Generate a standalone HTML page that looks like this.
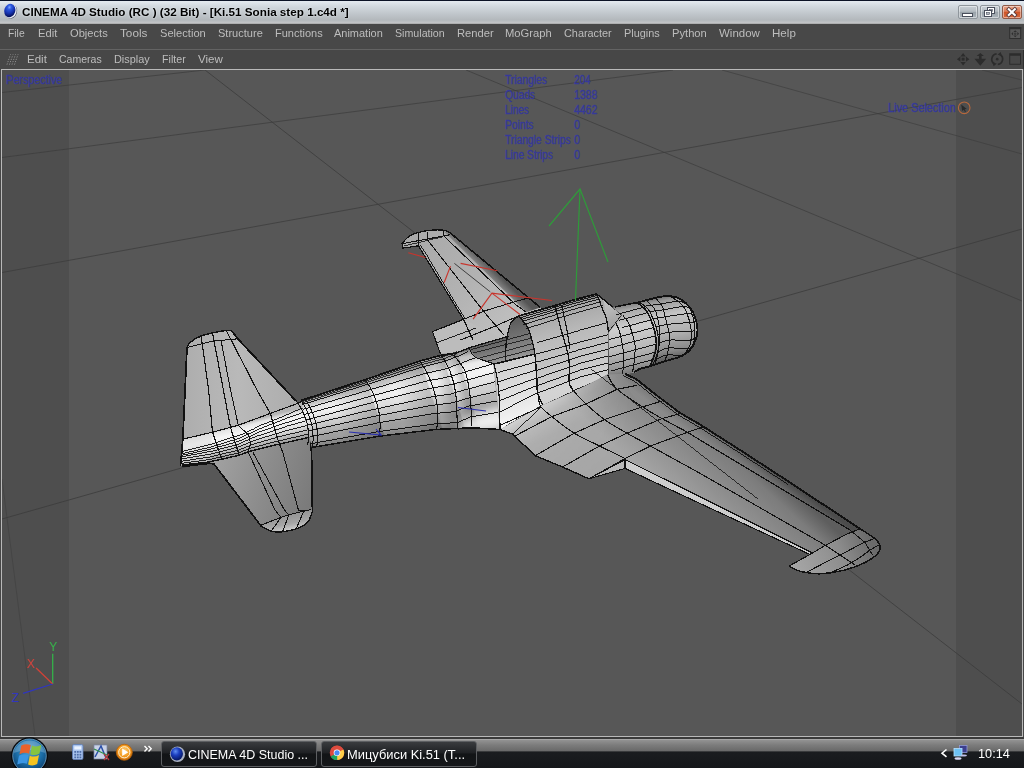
<!DOCTYPE html>
<html lang="en">
<head>
<meta charset="utf-8">
<title>CINEMA 4D Studio (RC ) (32 Bit) - [Ki.51 Sonia step 1.c4d *]</title>
<style>
html,body{margin:0;padding:0;}
body{width:1024px;height:768px;overflow:hidden;position:relative;background:#474747;
  font-family:"Liberation Sans","DejaVu Sans",sans-serif;font-size:11px;color:#c8c8c8;}
.abs{position:absolute;}
/* ---------- window title bar ---------- */
#titlebar{left:0;top:0;width:1024px;height:24px;
  background:linear-gradient(#0b1326 0,#0b1326 1px,#e4eaf0 1px,#d3dae0 6px,#c2c8cd 13px,#b3b8bc 20px,#c4c6c8 23px,#9a9a9a 24px);}
#title{transform:scaleX(.9995);transform-origin:0 0;left:21.500px;top:5px;font-size:11.700px;font-weight:bold;color:#000;white-space:nowrap;letter-spacing:0px;
  text-shadow:0 0 2px #eef2f6;}
.wbtn{top:4.500px;width:19.500px;height:14.500px;border:1px solid #8f969c;border-radius:2px;box-sizing:border-box;
  background:linear-gradient(#c9d0d6,#b5bcc2 45%,#99a2a9 50%,#aab2b9);box-shadow:inset 0 0 0 1px rgba(255,255,255,.45);}
#bclose{background:linear-gradient(#e9a589,#dd7a55 45%,#cc5428 50%,#d9683c);border-color:#8f5a48;}
/* ---------- menus ---------- */
#menubar{left:0;top:24px;width:1024px;height:25px;background:#484848;}
#menusep{left:0;top:49px;width:1024px;height:1px;background:#636363;}
#viewbar{left:0;top:50px;width:1024px;height:19px;background:#474747;}
.mi{position:absolute;top:3.400px;white-space:nowrap;font-size:11px;color:#bdbdbd;transform-origin:0 0;}
.vi{position:absolute;top:3px;white-space:nowrap;font-size:11px;color:#bdbdbd;transform-origin:0 0;}
/* ---------- viewport ---------- */
#viewport{left:1px;top:69px;width:1022px;height:668px;box-sizing:border-box;border:1px solid #b9b9b9;background:#575757;overflow:hidden;}
#bandL{left:0;top:0;width:67px;height:666px;background:#4e4e4e;}
#bandR{left:954px;top:0;width:66px;height:666px;background:#4e4e4e;}
.hud{position:absolute;color:#3a3fa8;font-size:11.5px;white-space:nowrap;transform-origin:0 0;}
/* ---------- taskbar ---------- */
#taskbar{left:0;top:737px;width:1024px;height:31px;
  background:linear-gradient(#3a3a3a 0,#3a3a3a 2px,#b2b2b2 2px,#909090 3.500px,#7c7c7c 8px,#686868 14.200px,#1a1c1f 14.700px,#15171a 31px);}
.tbtn{top:3.500px;height:26px;box-sizing:border-box;border:1px solid #5d5f62;border-radius:3px;background:linear-gradient(#3a3c3f,#1f2124 45%,#121416 50%,#15171a);
  color:#fff;font-size:12px;white-space:nowrap;}
.tbtn span{position:absolute;top:6px;transform:scaleX(.9995);transform-origin:0 0;}
#clock{transform:scaleX(1.06);transform-origin:0 0;left:977.500px;top:10px;color:#fff;font-size:12px;}
</style>
</head>
<body>
<!-- TITLE BAR -->
<div id="titlebar" class="abs">
  <svg class="abs" style="left:0;top:0" width="22" height="24" viewBox="0 0 22 24">
    <defs><radialGradient id="c4d" cx="38%" cy="28%" r="70%"><stop offset="0" stop-color="#7fa6ff"/><stop offset=".25" stop-color="#2f5be0"/><stop offset=".65" stop-color="#1733b0"/><stop offset="1" stop-color="#07135e"/></radialGradient></defs>
    <g transform="rotate(18 10 10.800)">
      <ellipse cx="11" cy="11.100" rx="6.300" ry="7.300" fill="#4a5064"/>
      <ellipse cx="10.500" cy="10.900" rx="6.200" ry="7.300" fill="#e8ecf4"/>
      <ellipse cx="9.700" cy="10.600" rx="5.500" ry="6.800" fill="url(#c4d)"/>
    </g>
  </svg>
  <div id="title" class="abs">CINEMA 4D Studio (RC ) (32 Bit) - [Ki.51 Sonia step 1.c4d *]</div>
  <div class="abs wbtn" style="left:958px"><svg width="17" height="12" class="abs" style="left:0;top:0"><rect x="3.5" y="7.5" width="10" height="3" fill="#fff" stroke="#4a4f5c"/></svg></div>
  <div class="abs wbtn" style="left:980px"><svg width="17" height="12" class="abs" style="left:0;top:0"><rect x="6.500" y="1.500" width="7" height="6" fill="#fff" stroke="#4a4f5c"/><rect x="8.5" y="3.500" width="3" height="2" fill="#b5bcc2" stroke="#4a4f5c" stroke-width=".6"/><rect x="3.500" y="4.500" width="7" height="6" fill="#fff" stroke="#4a4f5c"/><rect x="5.500" y="6.500" width="3" height="2" fill="#b5bcc2" stroke="#4a4f5c" stroke-width=".6"/></svg></div>
  <div id="bclose" class="abs wbtn" style="left:1002px"><svg width="17" height="12" class="abs" style="left:0;top:0"><path d="M5.800 3.300 L11.800 9 M11.800 3.300 L5.800 9" stroke="#5b3a3a" stroke-width="3.800" stroke-linecap="square"/><path d="M5.800 3.300 L11.800 9 M11.800 3.300 L5.800 9" stroke="#fff" stroke-width="2.100" stroke-linecap="square"/></svg></div>
</div>

<!-- MAIN MENU -->
<div id="menubar" class="abs">
  <span class="mi" style="left:7.7px;transform:scaleX(0.939)">File</span>
  <span class="mi" style="left:37.6px;transform:scaleX(1.017)">Edit</span>
  <span class="mi" style="left:69.6px;transform:scaleX(1.013)">Objects</span>
  <span class="mi" style="left:120.1px;transform:scaleX(1.066)">Tools</span>
  <span class="mi" style="left:159.6px;transform:scaleX(1.011)">Selection</span>
  <span class="mi" style="left:217.6px;transform:scaleX(1.003)">Structure</span>
  <span class="mi" style="left:274.6px;transform:scaleX(1.001)">Functions</span>
  <span class="mi" style="left:333.6px;transform:scaleX(0.997)">Animation</span>
  <span class="mi" style="left:394.6px;transform:scaleX(0.968)">Simulation</span>
  <span class="mi" style="left:456.6px;transform:scaleX(1.020)">Render</span>
  <span class="mi" style="left:505.1px;transform:scaleX(1.020)">MoGraph</span>
  <span class="mi" style="left:563.6px;transform:scaleX(0.988)">Character</span>
  <span class="mi" style="left:623.6px;transform:scaleX(0.991)">Plugins</span>
  <span class="mi" style="left:671.6px;transform:scaleX(1.016)">Python</span>
  <span class="mi" style="left:718.6px;transform:scaleX(1.044)">Window</span>
  <span class="mi" style="left:771.6px;transform:scaleX(1.054)">Help</span>
</div>
<div id="menusep" class="abs"></div>

<!-- VIEWPORT MENU -->
<div id="viewbar" class="abs">
  <span class="vi" style="left:26.6px;transform:scaleX(1.046)">Edit</span>
  <span class="vi" style="left:58.7px;transform:scaleX(0.956)">Cameras</span>
  <span class="vi" style="left:113.6px;transform:scaleX(0.991)">Display</span>
  <span class="vi" style="left:161.6px;transform:scaleX(0.969)">Filter</span>
  <span class="vi" style="left:197.6px;transform:scaleX(1.050)">View</span>
</div>


<!-- menu bar / viewport nav icons -->
<svg class="abs" style="left:0;top:0;pointer-events:none" width="1024" height="72" viewBox="0 0 1024 72">
  <!-- layout icon in main menu -->
  <rect x="1009.7" y="27.5" width="11" height="11" fill="#585858" stroke="#2f2f2f" stroke-width="1"/>
  <rect x="1009.2" y="27" width="12" height="2.200" fill="#2f2f2f"/>
  <path d="M1015.2 30.2 l1.800 1.800 h-3.600z M1015.2 37.200 l1.800 -1.800 h-3.600z M1011.3 33.700 l1.800 -1.800 v3.600z M1019.100 33.700 l-1.800 -1.800 v3.600z" fill="#2f2f2f"/>
  <circle cx="1015.2" cy="33.700" r="1.300" fill="#3c3c3c"/>
  <!-- grip -->
  <g stroke="#a9a9a9" stroke-width="1" stroke-dasharray="1 1.500" opacity=".9">
    <path d="M7 64.500 L10.500 54.500 M9.500 64.500 L13 54.500 M12 64.500 L15.500 54.500 M14.500 64.500 L18 54.500"/>
  </g>
  <!-- move -->
  <g fill="#2c2c2c">
    <path d="M963.100 52.900 l2.700 3.500 h-5.400z M963.100 65.400 l2.700 -3.500 h-5.400z M956.900 59.150 l3.500 -2.700 v5.400z M969.400 59.150 l-3.500 -2.700 v5.400z"/>
    <rect x="961.600" y="57.650" width="3" height="3"/>
    <!-- dolly -->
    <path d="M980.300 52.900 l3.700 3.200 h-2.400 v2.700 h3 l1.600 0 l-5.900 6.900 l-5.900 -6.900 h4.600 v-2.700 h-2.400z"/>
    <!-- maximise -->
    <path d="M1009.200 53.250 h11.800 v11.400 h-11.800z M1010.200 55.650 v8 h9.800 v-8z" fill-rule="evenodd"/>
  </g>
  <!-- rotate -->
  <g fill="none" stroke="#2c2c2c" stroke-width="1.700">
    <path d="M996.600 53.900 A5.400 5.400 0 0 0 994.400 63.900"/>
    <path d="M997.800 64.400 A5.400 5.400 0 0 0 1000 54.400"/>
  </g>
  <path d="M992.800 62 l4 1.700 l-3.300 2.500z M1001.600 56.300 l-4 -1.700 l3.300 -2.500z" fill="#2c2c2c"/>
  <circle cx="997.200" cy="59.150" r="1.300" fill="#2c2c2c"/>
  <rect x="1023" y="50" width="1" height="19" fill="#2e2e2e"/>
</svg>

<!-- VIEWPORT -->
<div id="viewport" class="abs">
  <div id="bandL" class="abs"></div>
  <div id="bandR" class="abs"></div>
  <svg id="scene" class="abs" style="left:-2px;top:-70px" width="1024" height="768" viewBox="0 0 1024 768">
  <defs>
<linearGradient id="gFus" gradientUnits="userSpaceOnUse" x1="430" y1="352" x2="447" y2="432"><stop offset="0" stop-color="#8e8e8e"/><stop offset="0.1" stop-color="#c9c9c9"/><stop offset="0.3" stop-color="#f4f4f4"/><stop offset="0.48" stop-color="#e2e2e2"/><stop offset="0.7" stop-color="#bcbcbc"/><stop offset="0.88" stop-color="#9b9b9b"/><stop offset="1" stop-color="#7e7e7e"/></linearGradient>
<linearGradient id="gStabU" gradientUnits="userSpaceOnUse" x1="187" y1="400" x2="300" y2="400"><stop offset="0" stop-color="#aeaeae"/><stop offset="0.45" stop-color="#b9b9b9"/><stop offset="1" stop-color="#acacac"/></linearGradient>
<linearGradient id="gStabL" gradientUnits="userSpaceOnUse" x1="215" y1="470" x2="312" y2="500"><stop offset="0" stop-color="#a0a0a0"/><stop offset="0.5" stop-color="#8c8c8c"/><stop offset="1" stop-color="#7a7a7a"/></linearGradient>
<linearGradient id="gFarW" gradientUnits="userSpaceOnUse" x1="420" y1="250" x2="500" y2="330"><stop offset="0" stop-color="#ababab"/><stop offset="0.5" stop-color="#b2b2b2"/><stop offset="1" stop-color="#bebebe"/></linearGradient>
<linearGradient id="gFarWLE" gradientUnits="userSpaceOnUse" x1="470" y1="270" x2="482" y2="258"><stop offset="0" stop-color="#b8b8b8"/><stop offset="0.5" stop-color="#8a8a8a"/><stop offset="1" stop-color="#555"/></linearGradient>
<linearGradient id="gWing" gradientUnits="userSpaceOnUse" x1="640" y1="470" x2="700" y2="405"><stop offset="0" stop-color="#a6a6a6"/><stop offset="0.45" stop-color="#8e8e8e"/><stop offset="0.8" stop-color="#7c7c7c"/><stop offset="1" stop-color="#5e5e5e"/></linearGradient>
<linearGradient id="gCowl" gradientUnits="userSpaceOnUse" x1="660" y1="296" x2="672" y2="360"><stop offset="0" stop-color="#6a6a6a"/><stop offset="0.08" stop-color="#9a9a9a"/><stop offset="0.3" stop-color="#c4c4c4"/><stop offset="0.6" stop-color="#b0b0b0"/><stop offset="0.85" stop-color="#8a8a8a"/><stop offset="1" stop-color="#5a5a5a"/></linearGradient>
<linearGradient id="gCowlR" gradientUnits="userSpaceOnUse" x1="622" y1="304" x2="634" y2="372"><stop offset="0" stop-color="#7a7a7a"/><stop offset="0.1" stop-color="#a8a8a8"/><stop offset="0.35" stop-color="#cecece"/><stop offset="0.65" stop-color="#bababa"/><stop offset="0.9" stop-color="#989898"/><stop offset="1" stop-color="#7a7a7a"/></linearGradient>
</defs>
<line x1="2" y1="92.5" x2="205" y2="70" stroke="#3c3c3c" stroke-width="0.9" opacity="0.8"/>
<line x1="2" y1="157.5" x2="673" y2="70" stroke="#3c3c3c" stroke-width="0.9" opacity="0.8"/>
<line x1="2" y1="272.5" x2="1022" y2="87.5" stroke="#3c3c3c" stroke-width="0.9" opacity="0.85"/>
<line x1="2" y1="519" x2="1022" y2="229" stroke="#3c3c3c" stroke-width="0.9" opacity="0.9"/>
<line x1="205" y1="70" x2="1022" y2="704" stroke="#3c3c3c" stroke-width="0.9" opacity="0.9"/>
<line x1="466" y1="70" x2="1022" y2="301" stroke="#3c3c3c" stroke-width="0.9" opacity="0.8"/>
<line x1="722" y1="70" x2="1022" y2="154" stroke="#3c3c3c" stroke-width="0.9" opacity="0.7"/>
<line x1="982" y1="70" x2="1022" y2="80" stroke="#3c3c3c" stroke-width="0.9" opacity="0.7"/>
<line x1="2" y1="479" x2="35" y2="736" stroke="#3c3c3c" stroke-width="0.9" opacity="0.55"/>
<polygon points="402,243.4 409,236.4 418.4,232.5 431,230.2 443.4,230.2 449.7,232.5 540.3,307.5 560,330 520,350 473,340 463.8,320 418.4,245.8 402.8,248.1" fill="url(#gFarW)" stroke="none" stroke-width="0" />
<polygon points="443.4,231 449.7,232.5 540.3,307.5 526.2,312.2" fill="url(#gFarWLE)" stroke="none" stroke-width="0" />
<polygon points="432.5,331.7 463.8,319.2 505,340 480,352 440.5,354" fill="#bcbcbc" stroke="none" stroke-width="0" />
<path d="M402 243.4 C403.2 242.2 406.3 238.2 409 236.4 C411.7 234.6 414.7 233.5 418.4 232.5 C422.1 231.5 426.8 230.6 431 230.2 C435.2 229.8 440.3 229.8 443.4 230.2 C446.5 230.6 448.6 232.1 449.7 232.5" fill="none" stroke="#111" stroke-width="1.26"  shape-rendering="crispEdges"/>
<polyline points="449.7,232.5 540.3,307.5" fill="none" stroke="#111" stroke-width="1.61"  shape-rendering="crispEdges"/>
<polyline points="402,243.4 402.8,248.1 418.4,245.8" fill="none" stroke="#111" stroke-width="1.15"  shape-rendering="crispEdges"/>
<polyline points="418.4,245.8 463.8,320 473,340" fill="none" stroke="#111" stroke-width="1.26"  shape-rendering="crispEdges"/>
<polyline points="420.5,245.3 428.6,257.5 465.5,318.6" fill="none" stroke="#111" stroke-width="0.92"  shape-rendering="crispEdges"/>
<polyline points="418.4,232.5 418.4,245.8" fill="none" stroke="#111" stroke-width="1.03"  shape-rendering="crispEdges"/>
<polyline points="402.8,243.6 449.7,234.8" fill="none" stroke="#111" stroke-width="1.03"  shape-rendering="crispEdges"/>
<polyline points="404,246 443.4,236.6" fill="none" stroke="#111" stroke-width="0.8"  shape-rendering="crispEdges"/>
<polyline points="427.8,232 427.8,240.3 485.6,313.8 504.4,335.6" fill="none" stroke="#111" stroke-width="1.03"  shape-rendering="crispEdges"/>
<polyline points="443.4,230.5 443.4,235.6 515.3,304.4 526.2,312.2" fill="none" stroke="#111" stroke-width="1.03"  shape-rendering="crispEdges"/>
<polyline points="463.8,319.2 485.6,310.6 513.8,302 527.8,298.1" fill="none" stroke="#111" stroke-width="1.03"  shape-rendering="crispEdges"/>
<polyline points="460.6,340 495,326.2 520,315.3" fill="none" stroke="#111" stroke-width="1.03"  shape-rendering="crispEdges"/>
<polyline points="432.5,331.7 463.8,319.2" fill="none" stroke="#111" stroke-width="1.15"  shape-rendering="crispEdges"/>
<polyline points="432.5,331.7 440.5,354" fill="none" stroke="#111" stroke-width="1.15"  shape-rendering="crispEdges"/>
<polyline points="436,343 476,328" fill="none" stroke="#111" stroke-width="0.92"  shape-rendering="crispEdges"/>
<polyline points="454.4,263.4 490.3,291.9" fill="none" stroke="#222" stroke-width="0.8" />
<polygon points="187,347.5 190,342.5 201,336 212.5,333 226,330.5 232,331 237.5,338.5 296,401 312,420 300,446 180.5,466 182.5,438.8" fill="url(#gStabU)" stroke="none" stroke-width="0" />
<polygon points="209.4,461.9 213.8,463.8 261.2,526.2 271.2,531.2 282.5,531.8 296.2,528.8 307.5,522.5 312.5,511.2 311.2,436.9 276.6,444.7 248.4,451.7 239,455.3" fill="url(#gStabL)" stroke="none" stroke-width="0" />
<linearGradient id="gSLtip" gradientUnits="userSpaceOnUse" x1="285" y1="512" x2="289" y2="532"><stop offset="0" stop-color="#8e8e8e"/><stop offset="0.6" stop-color="#a6a6a6"/><stop offset="1" stop-color="#d8d8d8"/></linearGradient>
<polygon points="261.2,526.2 271.2,531.2 282.5,531.8 296.2,528.8 307.5,522.5 312.5,511.2 311,509.5 290,514.5 268,522" fill="url(#gSLtip)" stroke="none" stroke-width="0" />
<linearGradient id="gCone" gradientUnits="userSpaceOnUse" x1="236" y1="424" x2="244" y2="456"><stop offset="0" stop-color="#b4b4b4"/><stop offset="0.12" stop-color="#e6e6e6"/><stop offset="0.3" stop-color="#f6f6f6"/><stop offset="0.55" stop-color="#e0e0e0"/><stop offset="0.8" stop-color="#b0b0b0"/><stop offset="1" stop-color="#8e8e8e"/></linearGradient>
<clipPath id="cCone"><polygon points="182.8,439.2 212.5,432.2 238.3,425.2 270.3,413.4 296.1,404 304,400.5 316,400 316,447 311,436.9 276.6,444.7 248.4,451.7 239,455.3 209.4,461.9 182,465"/></clipPath>
<polygon points="182.8,439.2 212.5,432.2 238.3,425.2 270.3,413.4 296.1,404 304,400.5 311,436.9 276.6,444.7 248.4,451.7 239,455.3 209.4,461.9 182,465" fill="url(#gCone)" stroke="none" stroke-width="0" />
<polygon points="182.8,439.2 212.5,432.2 209.4,461.9 182,465" fill="#d8d8d8" stroke="none" stroke-width="0" opacity=".55"/>
<path d="M187 347.5 C187.5 346.7 187.7 344.4 190 342.5 C192.3 340.6 197.2 337.6 201 336 C204.8 334.4 208.3 333.9 212.5 333 C216.7 332.1 222.8 330.8 226 330.5 C229.2 330.2 231 330.9 232 331" fill="none" stroke="#111" stroke-width="1.38"  shape-rendering="crispEdges"/>
<polyline points="232,331 237.5,338.5 296,401" fill="none" stroke="#111" stroke-width="1.84"  shape-rendering="crispEdges"/>
<polyline points="187,347.5 182.8,439.2 180.5,466" fill="none" stroke="#111" stroke-width="1.72"  shape-rendering="crispEdges"/>
<polyline points="187,347.5 212.5,341.2 237.5,338.8" fill="none" stroke="#111" stroke-width="1.03"  shape-rendering="crispEdges"/>
<polyline points="201.2,336.2 208.6,390 212.5,432.2 221.9,459.5" fill="none" stroke="#111" stroke-width="1.15"  shape-rendering="crispEdges"/>
<polyline points="212.5,333 223.4,390 230.5,427.5 239,454.8" fill="none" stroke="#111" stroke-width="1.15"  shape-rendering="crispEdges"/>
<polyline points="221.2,341.2 230.5,390 238.3,425.2" fill="none" stroke="#111" stroke-width="1.03"  shape-rendering="crispEdges"/>
<polyline points="226.2,330.5 257,390 270.3,413.4 278,440 282.8,452.5" fill="none" stroke="#111" stroke-width="1.15"  shape-rendering="crispEdges"/>
<polyline points="182.8,439.2 212.5,432.2 238.3,425.2 270.3,413.4 296.1,404 304,400.5" fill="none" stroke="#111" stroke-width="1.15"  shape-rendering="crispEdges"/>
<polyline points="182.4,451.3 211.3,444.1 238.5,435.4 264.5,423.6 292.1,412.3 306,406.7" fill="none" stroke="#111" stroke-width="0.92"  shape-rendering="crispEdges"/>
<polyline points="182.4,453.6 211,447 238.6,438.5 262.1,427.8 289.8,417.1 306.7,411.1" fill="none" stroke="#111" stroke-width="0.92"  shape-rendering="crispEdges"/>
<polyline points="182.3,455.2 210.7,449.2 238.7,441.3 259.7,431.9 287.5,422 307.5,415.8" fill="none" stroke="#111" stroke-width="0.92"  shape-rendering="crispEdges"/>
<polyline points="182.3,456.7 210.5,451.4 238.7,443.8 257.5,435.8 285.3,426.6 308.2,420.2" fill="none" stroke="#111" stroke-width="0.92"  shape-rendering="crispEdges"/>
<polyline points="182.2,458.8 210.2,454.2 238.8,446.9 255,440.2 282.8,431.7 309,424.9" fill="none" stroke="#111" stroke-width="0.92"  shape-rendering="crispEdges"/>
<polyline points="182.1,461.1 209.9,457 238.9,450 252.6,444.4 280.6,436.4 309.7,429.3" fill="none" stroke="#111" stroke-width="0.92"  shape-rendering="crispEdges"/>
<polyline points="182.1,463.2 209.6,459.6 238.9,452.8 250.4,448.2 278.5,440.8 310.4,433.3" fill="none" stroke="#111" stroke-width="0.92"  shape-rendering="crispEdges"/>
<polyline points="182,465 209.4,461.9 239,455.3 248.4,451.7 276.6,444.7 311,436.9" fill="none" stroke="#111" stroke-width="1.38"  shape-rendering="crispEdges"/>
<polyline points="238.3,425.2 248.4,435 250.8,444 247.7,452.5 239,455.3" fill="none" stroke="#111" stroke-width="1.03"  shape-rendering="crispEdges"/>
<polyline points="182,466.5 209.4,463.4 213.8,463.8 261.2,526.2" fill="none" stroke="#111" stroke-width="1.72"  shape-rendering="crispEdges"/>
<path d="M261.2 526.2 C262.9 527.1 267.7 530.3 271.2 531.2 C274.8 532.2 278.3 532.2 282.5 531.8 C286.7 531.3 292.1 530.3 296.2 528.8 C300.4 527.2 304.8 525.4 307.5 522.5 C310.2 519.6 311.7 513.1 312.5 511.2" fill="none" stroke="#111" stroke-width="1.38"  shape-rendering="crispEdges"/>
<polyline points="311.2,437.5 312.5,511.2" fill="none" stroke="#111" stroke-width="1.84"  shape-rendering="crispEdges"/>
<path d="M261.2 525 C264 524 272.7 520.5 277.5 518.8 C282.3 517 284.4 516 290 514.5 C295.6 513 307.7 510.3 311.2 509.5" fill="none" stroke="#111" stroke-width="1.03"  shape-rendering="crispEdges"/>
<polyline points="248.4,452.5 275,510 281,517.5 271.2,531.2" fill="none" stroke="#111" stroke-width="1.03"  shape-rendering="crispEdges"/>
<polyline points="253,452.5 284.4,510 288.8,515 282.5,531.8" fill="none" stroke="#111" stroke-width="1.03"  shape-rendering="crispEdges"/>
<polyline points="282.8,452.5 298.4,510 303.8,511 296.2,528.8" fill="none" stroke="#111" stroke-width="1.03"  shape-rendering="crispEdges"/>
<polyline points="209.4,461.9 221.9,459.5 239,455.3" fill="none" stroke="#111" stroke-width="0.92"  shape-rendering="crispEdges"/>
<filter id="bl2" x="-5%" y="-5%" width="110%" height="110%"><feGaussianBlur stdDeviation="1.6"/></filter>
<filter id="bl5" x="-30%" y="-30%" width="160%" height="160%"><feGaussianBlur stdDeviation="5"/></filter>
<clipPath id="cFus"><polygon points="301,400.5 365.2,379.6 419.9,361 441.4,355.2 456,353.2 470,347.5 491,341.5 500,429.5 472.6,427.8 459,428.4 436.5,429.4 378.9,436.2 312,447.5"/></clipPath>
<polygon points="301,400.5 365.2,379.6 419.9,361 441.4,355.2 456,353.2 470,347.5 491,341.5 500,429.5 472.6,427.8 459,428.4 436.5,429.4 378.9,436.2 312,447.5" fill="#c4c4c4" stroke="none" stroke-width="0" />
<g clip-path="url(#cFus)"><g filter="url(#bl2)">
<polygon points="294.1,396.7 364.1,375.1 418.6,355.5 440,349.3 454.7,343.2 496.3,331.3 498.1,349.5 457.5,356.5 443,361.8 421.4,367.2 366.4,384.7 296,404.7" fill="#9a9a9a" stroke="none" stroke-width="0" />
<polygon points="296,404.7 366.4,384.7 421.4,367.2 443,361.8 457.5,356.5 498.1,349.5 498.8,356 459.1,364 444.7,369.1 423.1,374 367.8,390.4 297.1,409.4" fill="#c6c6c6" stroke="none" stroke-width="0" />
<polygon points="297.1,409.4 367.8,390.4 423.1,374 444.7,369.1 459.1,364 498.8,356 499.4,362.2 461,373.2 446.7,377.2 424.9,381.5 369.3,396.6 298.3,414.6" fill="#ececec" stroke="none" stroke-width="0" />
<polygon points="298.3,414.6 369.3,396.6 424.9,381.5 446.7,377.2 461,373.2 499.4,362.2 500.3,371 462.8,381.4 448.6,385.2 426.7,389 370.8,402.8 299.5,419.8" fill="#f3f3f3" stroke="none" stroke-width="0" />
<polygon points="299.5,419.8 370.8,402.8 426.7,389 448.6,385.2 462.8,381.4 500.3,371 501.2,380.3 464.6,389.9 450.7,394 428.7,397.3 372.5,409.6 300.8,425.4" fill="#e4e4e4" stroke="none" stroke-width="0" />
<polygon points="300.8,425.4 372.5,409.6 428.7,397.3 450.7,394 464.6,389.9 501.2,380.3 502.2,390 466.4,398.6 452.8,402.8 430.7,405.5 374.1,416.4 302.1,431.1" fill="#cecece" stroke="none" stroke-width="0" />
<polygon points="302.1,431.1 374.1,416.4 430.7,405.5 452.8,402.8 466.4,398.6 502.2,390 503.1,399.5 468,406.2 455,411.6 432.7,413.7 375.7,423.2 303.5,436.7" fill="#b6b6b6" stroke="none" stroke-width="0" />
<polygon points="303.5,436.7 375.7,423.2 432.7,413.7 455,411.6 468,406.2 503.1,399.5 504.3,410.8 470.3,417 457.6,422.5 435.2,423.9 377.8,431.7 305.1,443.7" fill="#a0a0a0" stroke="none" stroke-width="0" />
<polygon points="305.1,443.7 377.8,431.7 435.2,423.9 457.6,422.5 470.3,417 504.3,410.8 506.7,435.2 473.9,434.1 460.4,434.3 437.8,434.9 380,440.7 306.9,451.3" fill="#888888" stroke="none" stroke-width="0" />
</g>
<linearGradient id="gSeg0" gradientUnits="userSpaceOnUse" x1="306.5" y1="424" x2="372" y2="407.9"><stop offset="0" stop-color="#fff" stop-opacity=".10"/><stop offset=".45" stop-color="#000" stop-opacity="0"/><stop offset="1" stop-color="#000" stop-opacity=".16"/></linearGradient>
<polygon points="301,397.5 365.2,376.6 385.9,439.2 319,450.5" fill="url(#gSeg0)" stroke="none" stroke-width="0" />
<linearGradient id="gSeg1" gradientUnits="userSpaceOnUse" x1="372" y1="407.9" x2="428.2" y2="395.2"><stop offset="0" stop-color="#fff" stop-opacity=".10"/><stop offset=".45" stop-color="#000" stop-opacity="0"/><stop offset="1" stop-color="#000" stop-opacity=".16"/></linearGradient>
<polygon points="365.2,376.6 419.9,358 443.5,432.4 385.9,439.2" fill="url(#gSeg1)" stroke="none" stroke-width="0" />
<linearGradient id="gSeg2" gradientUnits="userSpaceOnUse" x1="428.2" y1="395.2" x2="450.2" y2="391.8"><stop offset="0" stop-color="#fff" stop-opacity=".10"/><stop offset=".45" stop-color="#000" stop-opacity="0"/><stop offset="1" stop-color="#000" stop-opacity=".16"/></linearGradient>
<polygon points="419.9,358 441.4,352.2 466,431.4 443.5,432.4" fill="url(#gSeg2)" stroke="none" stroke-width="0" />
<linearGradient id="gSeg3" gradientUnits="userSpaceOnUse" x1="450.2" y1="391.8" x2="464.3" y2="388.6"><stop offset="0" stop-color="#fff" stop-opacity=".10"/><stop offset=".45" stop-color="#000" stop-opacity="0"/><stop offset="1" stop-color="#000" stop-opacity=".16"/></linearGradient>
<polygon points="441.4,352.2 456,346.5 479.6,430.8 466,431.4" fill="url(#gSeg3)" stroke="none" stroke-width="0" />
<ellipse cx="497" cy="419" rx="40" ry="11" transform="rotate(-14 497 419)" fill="#fff" opacity=".85" filter="url(#bl5)"/>
</g>
<linearGradient id="gFront" gradientUnits="userSpaceOnUse" x1="548" y1="306" x2="572" y2="408"><stop offset="0" stop-color="#7c7c7c"/><stop offset="0.05" stop-color="#a6a6a6"/><stop offset="0.3" stop-color="#bababa"/><stop offset="0.55" stop-color="#c4c4c4"/><stop offset="0.8" stop-color="#d4d4d4"/><stop offset="1" stop-color="#d0d0d0"/></linearGradient>
<polygon points="493.8,363.8 535,353.8 533.2,342.5 527.4,326.9 518.6,316 551.8,306.4 575.2,299.5 596.7,294 603.5,299.5 612,307.5 637,303 637,372 625,374 607.4,374.6 575,392.5 542.5,405 506,426 500,429.5" fill="url(#gFront)" stroke="none" stroke-width="0" />
<linearGradient id="gSide5" gradientUnits="userSpaceOnUse" x1="505" y1="362" x2="520" y2="425"><stop offset="0" stop-color="#cfcfcf"/><stop offset="0.5" stop-color="#e0e0e0"/><stop offset="1" stop-color="#f6f6f6"/></linearGradient>
<polygon points="493.8,363.8 535,353.8 536.9,380 537.5,392.5 542.5,405 506,426 500,429.5 499.4,400 497.5,380" fill="url(#gSide5)" stroke="none" stroke-width="0" />
<linearGradient id="gPit" gradientUnits="userSpaceOnUse" x1="488" y1="340" x2="494" y2="365"><stop offset="0" stop-color="#5a5a5a"/><stop offset="0.45" stop-color="#777777"/><stop offset="1" stop-color="#9c9c9c"/></linearGradient>
<polygon points="453.8,354 470,347.5 508.8,336.2 518.6,316 527.4,326.9 532.5,342.5 535,353.8 493.8,363.8 475,356.9 470,350" fill="url(#gPit)" stroke="none" stroke-width="0" />
<linearGradient id="gArch" gradientUnits="userSpaceOnUse" x1="512" y1="316" x2="520" y2="356"><stop offset="0" stop-color="#565656"/><stop offset="0.5" stop-color="#727272"/><stop offset="1" stop-color="#909090"/></linearGradient>
<polygon points="518.6,316 510.8,323 506.9,338.6 505.8,352 535,353.8 533.2,342.5 527.4,326.9" fill="url(#gArch)" stroke="none" stroke-width="0" />
<linearGradient id="gFacet" gradientUnits="userSpaceOnUse" x1="603" y1="300" x2="615" y2="330"><stop offset="0" stop-color="#c6c6c6"/><stop offset="1" stop-color="#9c9c9c"/></linearGradient>
<polygon points="603.5,299.5 622,315 608.4,332.7 606.5,319" fill="url(#gFacet)" stroke="none" stroke-width="0" />
<polyline points="302,404.7 366.4,384.7 421.4,367.2 443,361.8 457.5,356.5 468,351" fill="none" stroke="#111" stroke-width="0.98"  shape-rendering="crispEdges"/>
<polyline points="303.1,409.4 367.8,390.4 423.1,374 444.7,369.1 459.1,364 476,357.5" fill="none" stroke="#111" stroke-width="0.98"  shape-rendering="crispEdges"/>
<polyline points="304.3,414.6 369.3,396.6 424.9,381.5 446.7,377.2 461,373.2 493.4,363.7" fill="none" stroke="#111" stroke-width="0.98"  shape-rendering="crispEdges"/>
<polyline points="305.5,419.8 370.8,402.8 426.7,389 448.6,385.2 462.8,381.4 494.3,372.5" fill="none" stroke="#111" stroke-width="0.98"  shape-rendering="crispEdges"/>
<polyline points="306.8,425.4 372.5,409.6 428.7,397.3 450.7,394 464.6,389.9 495.2,381.8" fill="none" stroke="#111" stroke-width="0.98"  shape-rendering="crispEdges"/>
<polyline points="308.1,431.1 374.1,416.4 430.7,405.5 452.8,402.8 466.4,398.6 496.2,391.5" fill="none" stroke="#111" stroke-width="0.98"  shape-rendering="crispEdges"/>
<polyline points="309.5,436.7 375.7,423.2 432.7,413.7 455,411.6 468,406.2 497.1,401" fill="none" stroke="#111" stroke-width="0.98"  shape-rendering="crispEdges"/>
<polyline points="311.1,443.7 377.8,431.7 435.2,423.9 457.6,422.5 470.3,417 498.3,412.3" fill="none" stroke="#111" stroke-width="0.98"  shape-rendering="crispEdges"/>
<polyline points="301,400.5 365.2,379.6 419.9,361 441.4,355.2 456,353.2" fill="none" stroke="#111" stroke-width="1.72"  shape-rendering="crispEdges"/>
<polyline points="301.3,401.8 365.6,381.2 420.4,362.9 441.9,357.2 456.5,351.7" fill="none" stroke="#111" stroke-width="0.8"  shape-rendering="crispEdges"/>
<polyline points="301.6,403.1 366,382.7 420.8,364.8 442.4,359.2 456.9,353.8" fill="none" stroke="#111" stroke-width="0.8"  shape-rendering="crispEdges"/>
<polyline points="312,447.5 378.9,436.2 436.5,429.4 459,428.4 472.6,427.8 500,429.5" fill="none" stroke="#111" stroke-width="1.49"  shape-rendering="crispEdges"/>
<path d="M296.5 401.5 C297 402.2 298.6 404.4 299.6 405.9 C300.5 407.3 301.2 408.8 302 410.2 C302.7 411.6 303.4 413.1 304 414.6 C304.6 416 305.2 417.4 305.7 418.9 C306.2 420.3 306.6 421.8 307 423.2 C307.4 424.7 307.7 426.2 307.9 427.6 C308.1 429.1 308.3 430.5 308.4 431.9 C308.5 433.4 308.6 434.9 308.6 436.3 C308.6 437.8 308.5 439.2 308.4 440.6 C308.2 442.1 307.6 444.3 307.5 445" fill="none" stroke="#111" stroke-width="1.03"  shape-rendering="crispEdges"/>
<path d="M301 400.5 C301.5 401.3 303.1 403.6 304.1 405.2 C305 406.8 305.7 408.3 306.5 409.9 C307.2 411.5 307.9 413 308.5 414.6 C309.1 416.2 309.7 417.7 310.2 419.3 C310.7 420.9 311.1 422.4 311.5 424 C311.9 425.6 312.2 427.1 312.4 428.7 C312.6 430.3 312.8 431.8 312.9 433.4 C313 435 313.1 436.5 313.1 438.1 C313.1 439.7 313 441.2 312.9 442.8 C312.7 444.4 312.1 446.7 312 447.5" fill="none" stroke="#111" stroke-width="1.03"  shape-rendering="crispEdges"/>
<path d="M305.5 400 C306 400.8 307.6 403.1 308.6 404.7 C309.5 406.3 310.2 407.8 311 409.4 C311.7 411 312.4 412.5 313 414.1 C313.6 415.7 314.2 417.2 314.7 418.8 C315.2 420.4 315.6 421.9 316 423.5 C316.4 425.1 316.7 426.6 316.9 428.2 C317.1 429.8 317.3 431.3 317.4 432.9 C317.5 434.5 317.6 436 317.6 437.6 C317.6 439.2 317.5 440.7 317.4 442.3 C317.2 443.9 316.6 446.2 316.5 447" fill="none" stroke="#111" stroke-width="1.03"  shape-rendering="crispEdges"/>
<path d="M365.2 379.6 C365.8 380.5 367.8 383.4 368.9 385.3 C370 387.1 371 389 371.9 390.9 C372.8 392.8 373.6 394.7 374.4 396.6 C375.1 398.5 375.8 400.4 376.4 402.2 C377.1 404.1 377.6 406 378 407.9 C378.5 409.8 378.9 411.7 379.2 413.6 C379.5 415.4 379.7 417.3 379.9 419.2 C380 421.1 380.1 423 380.1 424.9 C380.1 426.8 380.1 428.7 379.9 430.5 C379.7 432.4 379.1 435.3 378.9 436.2" fill="none" stroke="#111" stroke-width="1.03"  shape-rendering="crispEdges"/>
<path d="M419.9 361 C420.6 362.1 423 365.6 424.3 367.8 C425.6 370.1 426.7 372.4 427.8 374.7 C428.9 377 429.9 379.2 430.8 381.5 C431.7 383.8 432.5 386.1 433.3 388.4 C434 390.6 434.6 392.9 435.2 395.2 C435.8 397.5 436.2 399.8 436.6 402 C437 404.3 437.2 406.6 437.4 408.9 C437.6 411.2 437.7 413.4 437.8 415.7 C437.8 418 437.8 420.3 437.6 422.6 C437.4 424.8 436.7 428.3 436.5 429.4" fill="none" stroke="#111" stroke-width="1.03"  shape-rendering="crispEdges"/>
<path d="M453.8 355 C455.6 357.7 462.3 364.6 465 371.2 C467.7 377.9 468.9 385.9 470 395 C471.1 404.1 471.6 420.8 471.9 426" fill="none" stroke="#111" stroke-width="1.09"  shape-rendering="crispEdges"/>
<path d="M441.4 355.2 C442.8 357.9 447.6 365 450 371.2 C452.4 377.5 454.4 383.4 455.6 392.5 C456.9 401.6 456.9 420 457.5 426 C458.1 432 458.8 428 459 428.4" fill="none" stroke="#111" stroke-width="1.09"  shape-rendering="crispEdges"/>
<path d="M493.8 363.8 C494.4 366.5 496.6 374 497.5 380 C498.4 386 499 392.3 499.4 400 C499.8 407.7 499.9 421.1 500 426 C500.1 430.9 500 428.9 500 429.5" fill="none" stroke="#111" stroke-width="1.15"  shape-rendering="crispEdges"/>
<polyline points="536.5,342.5 578,330.6 608,322.5" fill="none" stroke="#111" stroke-width="0.98"  shape-rendering="crispEdges"/>
<polyline points="497.4,363.8 536.5,353.8 578,342.5 608,334.8" fill="none" stroke="#111" stroke-width="0.98"  shape-rendering="crispEdges"/>
<polyline points="497.8,372.5 536.5,361.9 578,350 608,342.3" fill="none" stroke="#111" stroke-width="0.98"  shape-rendering="crispEdges"/>
<polyline points="498.2,381.8 536.5,370 578,356.9 608,349.2" fill="none" stroke="#111" stroke-width="0.98"  shape-rendering="crispEdges"/>
<polyline points="498.6,391.5 536.5,378.1 578,363.8 608,356" fill="none" stroke="#111" stroke-width="0.98"  shape-rendering="crispEdges"/>
<polyline points="499,401 536.5,385.6 578,370.6 608,362.9" fill="none" stroke="#111" stroke-width="0.98"  shape-rendering="crispEdges"/>
<polyline points="499.4,412.3 536.5,393.1 578,377.5 608,369.8" fill="none" stroke="#111" stroke-width="0.98"  shape-rendering="crispEdges"/>
<polyline points="506,426 542.5,405 575,390 608.8,376" fill="none" stroke="#111" stroke-width="0.98"  shape-rendering="crispEdges"/>
<polyline points="518.6,316 551.8,306.4 575.2,299.5 596.7,294" fill="none" stroke="#111" stroke-width="1.72"  shape-rendering="crispEdges"/>
<polyline points="519.5,317.6 552.4,308 575.7,301.1 597.5,295.4" fill="none" stroke="#111" stroke-width="0.92"  shape-rendering="crispEdges"/>
<polyline points="520.5,319.4 553,309.8 576.2,302.9 598.4,297.1" fill="none" stroke="#111" stroke-width="0.92"  shape-rendering="crispEdges"/>
<polyline points="521.7,321.6 553.8,312 576.9,305.1 599.5,299" fill="none" stroke="#111" stroke-width="0.92"  shape-rendering="crispEdges"/>
<polyline points="523.3,324.6 554.8,315 577.8,308.1 601,301.7" fill="none" stroke="#111" stroke-width="0.92"  shape-rendering="crispEdges"/>
<polyline points="525.5,328.5 556.2,318.9 579,312 603,305.2" fill="none" stroke="#111" stroke-width="0.92"  shape-rendering="crispEdges"/>
<path d="M518.6 316 C517.3 317.2 512.8 319.2 510.8 323 C508.9 326.8 507.8 333.8 506.9 338.6 C506 343.4 505.8 349.8 505.6 352" fill="none" stroke="#111" stroke-width="1.26"  shape-rendering="crispEdges"/>
<path d="M518.6 316 C520.1 317.8 525.1 322.5 527.4 326.9 C529.7 331.3 531.2 337.8 532.5 342.5 C533.8 347.2 534.3 348.8 535 355 C535.7 361.2 536.5 373.8 536.9 380 C537.3 386.2 536.6 388.3 537.5 392.5 C538.4 396.7 541.7 402.9 542.5 405" fill="none" stroke="#111" stroke-width="1.38"  shape-rendering="crispEdges"/>
<path d="M555 306 C556 310 559 321.2 561.2 330 C563.5 338.8 567.4 349.8 568.8 358.8 C570.1 367.7 568.4 378.1 569.4 383.8 C570.4 389.4 574.1 391 575 392.5" fill="none" stroke="#111" stroke-width="1.26"  shape-rendering="crispEdges"/>
<path d="M561.6 304.5 C562.5 308.8 565.5 322.6 566.9 330 C568.3 337.4 569.5 345.6 570 348.8" fill="none" stroke="#111" stroke-width="1.03"  shape-rendering="crispEdges"/>
<polyline points="596.7,294 603.5,299.5 622,315 608.4,332.7" fill="none" stroke="#111" stroke-width="1.38"  shape-rendering="crispEdges"/>
<path d="M596.7 294 C597.7 296.5 600.9 304.6 602.5 308.8 C604.1 312.9 605.5 315 606.5 319 C607.5 323 608 326.7 608.4 332.7 C608.8 338.7 608.7 347.8 608.8 355 C608.8 362.2 608.8 372.5 608.8 376" fill="none" stroke="#111" stroke-width="1.26"  shape-rendering="crispEdges"/>
<polyline points="453.8,354 470,347.5 508.8,336.2" fill="none" stroke="#111" stroke-width="1.26"  shape-rendering="crispEdges"/>
<path d="M470 347.5 C470 347.9 469.2 348.4 470 350 C470.8 351.6 471 354.6 475 356.9 C479 359.2 490.6 362.6 493.8 363.8" fill="none" stroke="#111" stroke-width="1.03"  shape-rendering="crispEdges"/>
<polyline points="493.8,363.8 535,353.8" fill="none" stroke="#111" stroke-width="1.03"  shape-rendering="crispEdges"/>
<polyline points="471,349.5 530,333.5" fill="none" stroke="#111" stroke-width="0.8"  shape-rendering="crispEdges"/>
<polyline points="473,353 531.5,338" fill="none" stroke="#111" stroke-width="0.8"  shape-rendering="crispEdges"/>
<polyline points="478,358.5 533,343.5" fill="none" stroke="#111" stroke-width="0.8"  shape-rendering="crispEdges"/>
<polyline points="486,361.5 534,349" fill="none" stroke="#111" stroke-width="0.8"  shape-rendering="crispEdges"/>
<polyline points="505.5,343 505.5,360" fill="none" stroke="#111" stroke-width="0.92"  shape-rendering="crispEdges"/>
<polygon points="608.4,332.7 622,315 612,307.5 615,306.9 637.5,302.5 652,318 656,345 650,366.2 640,368.8 633.8,372.5 625,374 608.8,378" fill="url(#gCowlR)" stroke="none" stroke-width="0" />
<path d="M637.5 302.5 C639.2 299.1 654.6 297.9 660 296.9 C665.4 295.9 666.7 295.9 670 296.2 C673.3 296.6 676.7 296.9 680 298.8 C683.3 300.6 687.4 304.2 690 307.5 C692.6 310.8 694.4 315 695.6 318.8 C696.9 322.5 697.5 326.5 697.5 330 C697.5 333.5 696.9 336.7 695.6 340 C694.4 343.3 692.4 347.3 690 350 C687.6 352.7 685.4 354.4 681.2 356.2 C677.1 358.1 670.2 359.6 665 361.2 C659.8 362.9 652.1 366.5 650 366.2 C647.9 366 651.5 363.1 652.5 360 C653.5 356.9 655.8 352.1 656.2 347.5 C656.7 342.9 656 337.5 655 332.5 C654 327.5 652.9 322.5 650 317.5 C647.1 312.5 635.8 305.9 637.5 302.5Z" fill="url(#gCowl)" stroke="none"/>
<path d="M637.5 302.5 C641.2 301.6 654.6 297.9 660 296.9 C665.4 295.9 666.7 295.9 670 296.2 C673.3 296.6 676.7 296.9 680 298.8 C683.3 300.6 687.4 304.2 690 307.5 C692.6 310.8 694.4 315 695.6 318.8 C696.9 322.5 697.5 326.5 697.5 330 C697.5 333.5 696.9 336.7 695.6 340 C694.4 343.3 692.4 347.3 690 350 C687.6 352.7 685.4 354.4 681.2 356.2 C677.1 358.1 670.2 359.6 665 361.2 C659.8 362.9 654.2 365 650 366.2 C645.8 367.5 642.7 367.7 640 368.8 C637.3 369.8 634.8 371.9 633.8 372.5" fill="none" stroke="#111" stroke-width="1.84"  shape-rendering="crispEdges"/>
<polyline points="615,306.9 637.5,302.5" fill="none" stroke="#111" stroke-width="1.61"  shape-rendering="crispEdges"/>
<path d="M637.5 303 C638.8 304 642.9 306.6 645 309 C647.1 311.4 648.3 313.6 650 317.5 C651.7 321.4 654 327.5 655 332.5 C656 337.5 656.7 342.9 656.2 347.5 C655.8 352.1 653.5 356.9 652.5 360 C651.5 363.1 650.4 365.2 650 366.2" fill="none" stroke="#111" stroke-width="1.61"  shape-rendering="crispEdges"/>
<path d="M640 302.5 C641.3 303.6 645.9 306.5 648 309 C650.1 311.5 650.9 313.6 652.5 317.5 C654.1 321.4 656.5 327.5 657.5 332.5 C658.5 337.5 658.9 342.9 658.5 347.5 C658.1 352.1 656.1 357 655 360 C653.9 363 652.5 364.6 652 365.5" fill="none" stroke="#111" stroke-width="1.03"  shape-rendering="crispEdges"/>
<path d="M646.9 301.2 C648.1 302.4 652.2 305.3 654 308 C655.8 310.7 656.5 313.2 657.5 317.5 C658.5 321.8 659.9 327.9 660 333.8 C660.1 339.6 658.8 347.5 658 352.5 C657.2 357.5 655.5 362.1 655 364" fill="none" stroke="#111" stroke-width="1.03"  shape-rendering="crispEdges"/>
<path d="M656.2 298.8 C657.3 300.1 660.8 303.2 662.5 307 C664.2 310.8 665.1 316.4 666.2 321.2 C667.4 326.1 669.1 331.2 669.4 336.2 C669.7 341.2 668.8 347.1 668 351.2 C667.2 355.4 665.1 359.6 664.5 361.3" fill="none" stroke="#111" stroke-width="1.03"  shape-rendering="crispEdges"/>
<path d="M671.2 297 C672.7 298 677.5 300.6 680 303 C682.5 305.4 684.4 306.8 686.2 311.2 C688.1 315.8 690.6 324.4 691.2 330 C691.9 335.6 691.2 340.8 690 345 C688.8 349.2 684.8 353.3 683.8 355" fill="none" stroke="#111" stroke-width="1.03"  shape-rendering="crispEdges"/>
<path d="M680 298.8 C681.3 300 685.9 303.3 688 306 C690.1 308.7 691.3 311 692.5 315 C693.7 319 694.8 325.4 695 330 C695.2 334.6 694.8 339 693.8 342.5 C692.7 346 689.6 349.8 688.8 351.2" fill="none" stroke="#111" stroke-width="1.03"  shape-rendering="crispEdges"/>
<path d="M623 315.6 C623.8 316.7 626.6 319.6 628 322 C629.4 324.4 630.1 326.2 631.2 330 C632.4 333.8 634.5 340 635 345 C635.5 350 634.8 355.4 634.4 360 C634 364.6 632.8 370.4 632.5 372.5" fill="none" stroke="#111" stroke-width="1.03"  shape-rendering="crispEdges"/>
<path d="M615.6 322.5 C616.2 323.8 618.1 327.3 619 330 C619.9 332.7 620.5 334.6 621.2 338.8 C622 342.9 623.5 349.8 623.8 355 C624 360.2 623.3 366.7 623 370 C622.7 373.3 622.2 374.2 622 375" fill="none" stroke="#111" stroke-width="1.03"  shape-rendering="crispEdges"/>
<polyline points="616,314.7 643,307.4" fill="none" stroke="#111" stroke-width="0.98"  shape-rendering="crispEdges"/>
<path d="M645.6 306 C648 305.7 654.9 304.8 660.2 304 C665.6 303.2 673.4 301.4 677.5 301.3 C681.6 301.1 683.7 302.9 684.9 303.2" fill="none" stroke="#111" stroke-width="0.98"  shape-rendering="crispEdges"/>
<polyline points="619,320.4 647.2,312.8" fill="none" stroke="#111" stroke-width="0.98"  shape-rendering="crispEdges"/>
<path d="M649.9 311.6 C652.1 311.3 657.8 310.6 663.2 309.8 C668.7 308.9 678.4 306.9 682.7 306.6 C687 306.3 688 307.9 689.1 308.2" fill="none" stroke="#111" stroke-width="0.98"  shape-rendering="crispEdges"/>
<polyline points="621.5,327.5 650.7,319.7" fill="none" stroke="#111" stroke-width="0.98"  shape-rendering="crispEdges"/>
<path d="M653.4 318.7 C655.3 318.3 659.5 317.6 665.1 316.8 C670.7 316 682.4 314 686.9 313.7 C691.4 313.3 691.4 314.5 692.3 314.7" fill="none" stroke="#111" stroke-width="0.98"  shape-rendering="crispEdges"/>
<polyline points="608.6,339.7 653.4,327.6" fill="none" stroke="#111" stroke-width="0.98"  shape-rendering="crispEdges"/>
<path d="M656.1 326.8 C657.9 326.4 661.4 325.3 666.9 324.5 C672.5 323.8 684.8 322.8 689.2 322.5 C693.7 322.1 693 322.4 693.7 322.4" fill="none" stroke="#111" stroke-width="0.98"  shape-rendering="crispEdges"/>
<polyline points="608.7,348.3 655.3,335.8" fill="none" stroke="#111" stroke-width="0.98"  shape-rendering="crispEdges"/>
<path d="M658.2 335.1 C659.9 334.7 663.1 332.9 668.6 332.3 C674.1 331.6 686.7 331.6 691.1 331.3 C695.5 330.9 694.3 330.4 695 330.3" fill="none" stroke="#111" stroke-width="0.98"  shape-rendering="crispEdges"/>
<polyline points="608.7,356.9 656,344.2" fill="none" stroke="#111" stroke-width="0.98"  shape-rendering="crispEdges"/>
<path d="M658.7 343.7 C660.5 343.1 663.8 340.7 669 340.1 C674.3 339.6 686.2 340.7 690.4 340.3 C694.6 340 693.6 338.5 694.2 338.1" fill="none" stroke="#111" stroke-width="0.98"  shape-rendering="crispEdges"/>
<polyline points="608.7,364.8 654.8,352.3" fill="none" stroke="#111" stroke-width="0.98"  shape-rendering="crispEdges"/>
<path d="M657.7 352.2 C659.5 351.5 663.3 348.6 668.3 348 C673.3 347.4 683.7 349.1 687.7 348.7 C691.6 348.3 691.3 346.1 692 345.6" fill="none" stroke="#111" stroke-width="0.98"  shape-rendering="crispEdges"/>
<polyline points="611,371 652.6,359.7" fill="none" stroke="#111" stroke-width="0.98"  shape-rendering="crispEdges"/>
<path d="M655.6 359.8 C657.4 359 662.1 355.8 666.7 355.1 C671.2 354.3 679.3 355.9 682.9 355.4 C686.5 354.8 687.3 352.3 688.2 351.7" fill="none" stroke="#111" stroke-width="0.98"  shape-rendering="crispEdges"/>
<polygon points="500,429.5 506,426 542.5,405 575,391 607.4,374.6 625,373.7 636.7,379.5 656.2,395 679.7,412.7 700,424.5 740,450 790,482.5 860,528.8 875,538.8 880,546.2 877.5,553.8 865,562.5 845,570 820,573.8 800,571.2 788.8,566.2 812.5,553 700,496.7 625,459.6 625,468.4 588.9,478.8 562.5,467 535.2,455.7 512.7,434.2" fill="url(#gWing)" stroke="none" stroke-width="0" />
<linearGradient id="gRootA" gradientUnits="userSpaceOnUse" x1="532" y1="398" x2="577" y2="487"><stop offset="0" stop-color="#fff" stop-opacity=".95"/><stop offset=".10" stop-color="#fff" stop-opacity=".62"/><stop offset="0.22" stop-color="#fff" stop-opacity=".3"/><stop offset=".42" stop-color="#fff" stop-opacity=".1"/><stop offset="1" stop-color="#fff" stop-opacity="0"/></linearGradient>
<linearGradient id="gRootB" gradientUnits="userSpaceOnUse" x1="500" y1="430" x2="640" y2="400"><stop offset="0" stop-color="#fff" stop-opacity="1"/><stop offset=".35" stop-color="#fff" stop-opacity=".75"/><stop offset=".7" stop-color="#fff" stop-opacity=".35"/><stop offset="1" stop-color="#fff" stop-opacity="0"/></linearGradient>
<mask id="mRoot"><rect x="480" y="360" width="260" height="150" fill="url(#gRootB)"/></mask>
<polygon points="500,429.5 506,426 542.5,405 575,391 607.4,374.6 625,373.7 636.7,379.5 656.2,395 679.7,412.7 700,424.5 740,450 790,482.5 860,528.8 875,538.8 880,546.2 877.5,553.8 865,562.5 845,570 820,573.8 800,571.2 788.8,566.2 812.5,553 700,496.7 625,459.6 625,468.4 588.9,478.8 562.5,467 535.2,455.7 512.7,434.2" fill="url(#gRootA)" stroke="none" stroke-width="0" mask="url(#mRoot)"/>
<linearGradient id="gLE" gradientUnits="userSpaceOnUse" x1="700" y1="440" x2="712" y2="424"><stop offset="0" stop-color="#8e8e8e"/><stop offset="0.55" stop-color="#6c6c6c"/><stop offset="1" stop-color="#3c3c3c"/></linearGradient>
<polygon points="625,373.7 636.7,379.5 656.2,395 679.7,412.7 700,424.5 740,450 790,482.5 860,528.8 875,538.8 865,542.5 850,530 700,440 687.5,432.3 662,418.6 642.6,406.9 630,392 625,380" fill="url(#gLE)" stroke="none" stroke-width="0" opacity=".55"/>
<polygon points="625,459.6 700,496.7 812.5,553 810,554.5 700,503.5 625,468.4" fill="#cdcdcd" stroke="none" stroke-width="0" />
<polygon points="588.9,478.8 625,468.4 625,459.6" fill="#b9b9b9" stroke="none" stroke-width="0" />
<linearGradient id="gTip" gradientUnits="userSpaceOnUse" x1="800" y1="572" x2="870" y2="540"><stop offset="0" stop-color="#a4a4a4"/><stop offset="0.6" stop-color="#8c8c8c"/><stop offset="1" stop-color="#6a6a6a"/></linearGradient>
<polygon points="860,528.8 875,538.8 880,546.2 877.5,553.8 865,562.5 845,570 820,573.8 800,571.2 788.8,566.2 812.5,553 826,545 847.5,533.8" fill="url(#gTip)" stroke="none" stroke-width="0" />
<polyline points="625,373.7 636.7,379.5 656.2,395 679.7,412.7 700,424.5 740,450 790,482.5 860,528.8" fill="none" stroke="#111" stroke-width="1.95"  shape-rendering="crispEdges"/>
<path d="M860 528.8 C862.5 530.4 871.7 535.8 875 538.8 C878.3 541.7 879.6 543.8 880 546.2 C880.4 548.8 880 551 877.5 553.8 C875 556.5 870.4 559.8 865 562.5 C859.6 565.2 852.5 568.1 845 570 C837.5 571.9 827.5 573.5 820 573.8 C812.5 574 805.2 572.5 800 571.2 C794.8 570 790.6 567.1 788.8 566.2" fill="none" stroke="#111" stroke-width="1.49"  shape-rendering="crispEdges"/>
<polyline points="788.8,566.2 812.5,553" fill="none" stroke="#111" stroke-width="1.15"  shape-rendering="crispEdges"/>
<polyline points="812.5,553 700,496.7 625,459.6 625,468.4 700,503.5 810,554.5" fill="none" stroke="#111" stroke-width="1.15"  shape-rendering="crispEdges"/>
<polyline points="625,468.4 588.9,478.8 625,459.6" fill="none" stroke="#111" stroke-width="1.15"  shape-rendering="crispEdges"/>
<polyline points="588.9,478.8 562.5,467 535.2,455.7 512.7,434.2 500,429.5" fill="none" stroke="#111" stroke-width="1.38"  shape-rendering="crispEdges"/>
<path d="M538.1 397.2 C538.6 398.8 538.7 403.7 541 406.9 C543.3 410.1 546.3 412.2 551.8 416.6 C557.3 421 566.2 428.3 574.2 433.2 C582.2 438.1 591.1 441.8 599.6 446 C608.1 450.2 620.8 456.5 625 458.6" fill="none" stroke="#111" stroke-width="1.09"  shape-rendering="crispEdges"/>
<path d="M569.4 383.8 C570.3 385.2 572.2 389.1 575 392.5 C577.8 395.9 581.1 399.5 586 404 C590.9 408.5 597.7 414.7 604.5 419.6 C611.3 424.5 619.4 428.8 627 433.2 C634.6 437.6 638.2 439.3 650.4 446 C662.6 452.7 691.7 468.8 700 473.3" fill="none" stroke="#111" stroke-width="1.09"  shape-rendering="crispEdges"/>
<polyline points="700,473.3 825,545 840,555 855,565" fill="none" stroke="#111" stroke-width="1.09"  shape-rendering="crispEdges"/>
<path d="M607.4 374.6 C609 377.1 611.3 383.9 617.2 389.3 C623.1 394.7 635.1 402 642.6 406.9 C650.1 411.8 654.5 414.4 662 418.6 C669.5 422.8 681.2 428.7 687.5 432.3 C693.8 435.9 697.9 438.7 700 440" fill="none" stroke="#111" stroke-width="1.09"  shape-rendering="crispEdges"/>
<polyline points="700,440 850,530 865,542.5 872.5,555" fill="none" stroke="#111" stroke-width="1.09"  shape-rendering="crispEdges"/>
<polyline points="623.4,375.9 635.1,381.7 654.6,397.2 678.1,414.9 698.4,426.7 738.4,452.2 788.4,484.7" fill="none" stroke="#111" stroke-width="0.92"  shape-rendering="crispEdges"/>
<polyline points="514.6,436.2 551.8,416.6 586,404 617.2,389.3 636.7,385.4" fill="none" stroke="#111" stroke-width="1.09"  shape-rendering="crispEdges"/>
<polyline points="535.2,455.7 574.2,433.2 604.5,419.6 642.6,406.9 662,401" fill="none" stroke="#111" stroke-width="1.09"  shape-rendering="crispEdges"/>
<polyline points="562.5,467 599.6,446 627,433.2 662,418.6 679.7,413.7" fill="none" stroke="#111" stroke-width="1.09"  shape-rendering="crispEdges"/>
<polyline points="588.9,478.8 625,458.6 650.4,446 687.5,432.3 702.5,427" fill="none" stroke="#111" stroke-width="1.09"  shape-rendering="crispEdges"/>
<polyline points="500,425.4 541,406.9" fill="none" stroke="#111" stroke-width="1.03"  shape-rendering="crispEdges"/>
<polyline points="513,434 541,407" fill="none" stroke="#111" stroke-width="0.92"  shape-rendering="crispEdges"/>
<polyline points="812.5,553 826,545 847.5,533.8 860,528.8" fill="none" stroke="#111" stroke-width="1.03"  shape-rendering="crispEdges"/>
<polyline points="806,572.5 830,560 845,552.5 863.8,542.5 873.8,538.8" fill="none" stroke="#111" stroke-width="1.03"  shape-rendering="crispEdges"/>
<polyline points="830,573 847.5,565 860,557.5 870,550 878.8,545" fill="none" stroke="#111" stroke-width="1.03"  shape-rendering="crispEdges"/>
<polyline points="590.8,368.8 758,499" fill="none" stroke="#1e1e1e" stroke-width="0.9" shape-rendering="crispEdges"/>
<polyline points="408.3,252.8 425.5,257.5" fill="none" stroke="#c8352d" stroke-width="1.15" />
<polyline points="450.5,266.1 444.2,282.5" fill="none" stroke="#c8352d" stroke-width="1.15" />
<polyline points="460.6,263.4 497.3,270.8" fill="none" stroke="#c8352d" stroke-width="1.15" />
<polyline points="473.1,319.2 491.9,293.1 552,300.5" fill="none" stroke="#c8352d" stroke-width="1.15" />
<polyline points="491.9,293.1 520,314.5" fill="none" stroke="#c8352d" stroke-width="1.15" />
<polyline points="575.5,300 580,189" fill="none" stroke="#2f9a3a" stroke-width="1.2" />
<polyline points="549,226 580,189 608,262" fill="none" stroke="#2f9a3a" stroke-width="1.2" />
<polyline points="458,407.5 486,411" fill="none" stroke="#2a2fb0" stroke-width="1.1" />
<polyline points="349,432 381,435 376,429" fill="none" stroke="#2a2fb0" stroke-width="1.1" />
<polyline points="381,435 378,431" fill="none" stroke="#2a2fb0" stroke-width="1.1" />
<polyline points="52.7,684 52.7,653.7" fill="none" stroke="#35b24a" stroke-width="1.3" />
<polyline points="52.7,684 36.1,668" fill="none" stroke="#d04238" stroke-width="1.3" />
<polyline points="52.7,684 23,693.4" fill="none" stroke="#3036c0" stroke-width="1.3" />
<text x="49.3" y="651.2" font-size="12" fill="#35b24a" font-family="Liberation Sans, sans-serif">Y</text>
<text x="26.4" y="667.6" font-size="12" fill="#d04238" font-family="Liberation Sans, sans-serif">X</text>
<text x="11.7" y="701.8" font-size="12" fill="#3036c0" font-family="Liberation Sans, sans-serif">Z</text>
<text x="504.9" y="84.1" font-size="12" fill="#35399a" textLength="42.1" lengthAdjust="spacingAndGlyphs" font-family="Liberation Sans, sans-serif" stroke="#35399a" stroke-width=".35">Triangles</text>
<text x="573.9" y="84.1" font-size="12" fill="#35399a" textLength="16.5" lengthAdjust="spacingAndGlyphs" font-family="Liberation Sans, sans-serif" stroke="#35399a" stroke-width=".35">204</text>
<text x="504.9" y="99.1" font-size="12" fill="#35399a" textLength="30" lengthAdjust="spacingAndGlyphs" font-family="Liberation Sans, sans-serif" stroke="#35399a" stroke-width=".35">Quads</text>
<text x="573.9" y="99.1" font-size="12" fill="#35399a" textLength="23.4" lengthAdjust="spacingAndGlyphs" font-family="Liberation Sans, sans-serif" stroke="#35399a" stroke-width=".35">1388</text>
<text x="504.9" y="114.1" font-size="12" fill="#35399a" textLength="24" lengthAdjust="spacingAndGlyphs" font-family="Liberation Sans, sans-serif" stroke="#35399a" stroke-width=".35">Lines</text>
<text x="573.9" y="114.1" font-size="12" fill="#35399a" textLength="23.4" lengthAdjust="spacingAndGlyphs" font-family="Liberation Sans, sans-serif" stroke="#35399a" stroke-width=".35">4462</text>
<text x="504.9" y="129.1" font-size="12" fill="#35399a" textLength="28.5" lengthAdjust="spacingAndGlyphs" font-family="Liberation Sans, sans-serif" stroke="#35399a" stroke-width=".35">Points</text>
<text x="573.9" y="129.1" font-size="12" fill="#35399a" textLength="6" lengthAdjust="spacingAndGlyphs" font-family="Liberation Sans, sans-serif" stroke="#35399a" stroke-width=".35">0</text>
<text x="504.9" y="144.1" font-size="12" fill="#35399a" textLength="65.7" lengthAdjust="spacingAndGlyphs" font-family="Liberation Sans, sans-serif" stroke="#35399a" stroke-width=".35">Triangle Strips</text>
<text x="573.9" y="144.1" font-size="12" fill="#35399a" textLength="6" lengthAdjust="spacingAndGlyphs" font-family="Liberation Sans, sans-serif" stroke="#35399a" stroke-width=".35">0</text>
<text x="504.9" y="159.1" font-size="12" fill="#35399a" textLength="47.9" lengthAdjust="spacingAndGlyphs" font-family="Liberation Sans, sans-serif" stroke="#35399a" stroke-width=".35">Line Strips</text>
<text x="573.9" y="159.1" font-size="12" fill="#35399a" textLength="6" lengthAdjust="spacingAndGlyphs" font-family="Liberation Sans, sans-serif" stroke="#35399a" stroke-width=".35">0</text>
<text x="6" y="83.5" font-size="12" fill="#35399a" textLength="56" lengthAdjust="spacingAndGlyphs" font-family="Liberation Sans, sans-serif" stroke="#35399a" stroke-width=".35">Perspective</text>
<text x="888" y="112" font-size="12" fill="#35399a" textLength="67.5" lengthAdjust="spacingAndGlyphs" font-family="Liberation Sans, sans-serif" stroke="#35399a" stroke-width=".35">Live Selection</text>
<circle cx="964.2" cy="107.8" r="5.8" fill="none" stroke="#b8683c" stroke-width="1.1"/>
<path d="M961.2 104.6 L966.8 109 L964.6 109.2 L966 111.6 L965 112 L963.8 109.8 L962.2 111 Z" fill="#2a2a2a"/>

  </svg>
</div>

<!-- TASKBAR -->
<div id="taskbar" class="abs">
  <div class="abs tbtn" style="left:161px;width:156px"><span style="left:26px;transform:scaleX(1.04)">CINEMA 4D Studio ...</span></div>
  <div class="abs tbtn" style="left:321px;width:156px"><span style="left:25px;transform:scaleX(1.073)">Мицубиси Ki.51 (Т...</span></div>
  <div id="clock" class="abs">10:14</div>
</div>
<svg class="abs" style="left:0;top:730px" width="1024" height="38" viewBox="0 730 1024 38">
  <defs>
    <radialGradient id="orb" cx="50%" cy="35%" r="70%"><stop offset="0" stop-color="#5aa0cc"/><stop offset=".55" stop-color="#1b6ea8"/><stop offset="1" stop-color="#0a3560"/></radialGradient>
    <radialGradient id="wmp" cx="50%" cy="40%" r="60%"><stop offset="0" stop-color="#ffd27a"/><stop offset=".6" stop-color="#f39a1e"/><stop offset="1" stop-color="#c96a08"/></radialGradient>
    <radialGradient id="c4db" cx="40%" cy="32%" r="65%"><stop offset="0" stop-color="#5f8df0"/><stop offset=".45" stop-color="#1c3fc0"/><stop offset="1" stop-color="#081a6a"/></radialGradient>
  </defs>
  <!-- start orb -->
  <circle cx="29.500" cy="755.800" r="18.500" fill="#06080c"/>
  <circle cx="29.500" cy="755.800" r="16.800" fill="url(#orb)" stroke="#7fb4d8" stroke-width=".7"/>
  <path d="M13.500 753 A16.500 16.500 0 0 1 45.500 753 Q29.500 747 13.500 753z" fill="#fff" opacity=".22"/>
  <path d="M21.300 745.600 q4.300 -2.600 9.500 -0.600 l-1.700 8.700 q-4.600 -2 -9.600 0.600z" fill="#e8622c"/>
  <path d="M32 745.500 q4.600 2.200 9.300 -0.800 l-1.800 8.900 q-4.400 2.700 -9.200 0.600z" fill="#86c440"/>
  <path d="M19 755.800 q5 -2.600 9.600 -0.600 l-1.700 8.600 q-4.500 -2 -9.700 0.700z" fill="#3b96e4"/>
  <path d="M29.800 755.700 q4.700 2.100 9.200 -0.600 l-1.800 8.900 q-4.500 2.700 -9.100 0.500z" fill="#f6c420"/>
  <!-- quick launch: calculator -->
  <rect x="72.500" y="744.500" width="10.500" height="15" rx="1.500" fill="#a9c4ee" stroke="#5f7fb8" stroke-width=".8"/>
  <rect x="74.300" y="746.300" width="7" height="3.200" fill="#e9f2ff"/>
  <g fill="#4f6ea8"><rect x="74.300" y="751" width="1.800" height="1.800"/><rect x="76.900" y="751" width="1.800" height="1.800"/><rect x="79.500" y="751" width="1.800" height="1.800"/><rect x="74.300" y="753.800" width="1.800" height="1.800"/><rect x="76.900" y="753.800" width="1.800" height="1.800"/><rect x="79.500" y="753.800" width="1.800" height="1.800"/><rect x="74.300" y="756.500" width="1.800" height="1.800"/><rect x="76.900" y="756.500" width="1.800" height="1.800"/><rect x="79.500" y="756.500" width="1.800" height="1.800"/></g>
  <!-- quick launch: math/plot icon -->
  <rect x="94" y="745" width="13" height="14" fill="#c9d2e6" stroke="#7a86a6" stroke-width=".7"/>
  <path d="M95 757 L101 746 L106 758" fill="none" stroke="#2b4fa8" stroke-width="1.500"/>
  <path d="M94 749 L107 755" stroke="#2f8f4a" stroke-width="1.200"/>
  <path d="M104 754 L109 760 M109 754 L104 760" stroke="#b8383a" stroke-width="1.200"/>
  <!-- quick launch: media player -->
  <circle cx="124.300" cy="752.300" r="8" fill="url(#wmp)" stroke="#b96208" stroke-width=".8"/>
  <circle cx="124.300" cy="752.300" r="5.600" fill="none" stroke="#fff3d6" stroke-width="1"/>
  <path d="M122.200 748.600 L128.300 752.300 L122.200 756z" fill="#fff"/>
  <!-- chevrons -->
  <path d="M144.500 746 l2.700 2.700 l-2.700 2.700 M148.500 746 l2.700 2.700 l-2.700 2.700" fill="none" stroke="#fff" stroke-width="1.400"/>
  <!-- c4d icon on button -->
  <ellipse cx="177.500" cy="754.200" rx="7.600" ry="7.800" fill="#aab2c2"/>
  <ellipse cx="176.800" cy="753.800" rx="6.200" ry="6.600" fill="url(#c4db)"/>
  <!-- chrome icon on button -->
  <circle cx="337" cy="752.800" r="7.200" fill="#dd4b3e"/>
  <path d="M337 752.800 L330.700 756.400 A7.200 7.200 0 0 0 337.300 760 L340.400 754.300z" fill="#1da462"/>
  <path d="M337 752.800 L337.300 760 A7.200 7.200 0 0 0 343.400 749.500 L337 749.500z" fill="#ffcd46"/>
  <path d="M337 752.800 L343.400 749.500 A7.200 7.200 0 0 0 330.800 749.200 L333.800 754.400z" fill="#dd4b3e"/>
  <circle cx="337" cy="752.800" r="3.300" fill="#fff"/>
  <circle cx="337" cy="752.800" r="2.600" fill="#4a8af4"/>
  <!-- tray -->
  <path d="M946.500 749.500 l-4.500 3.700 l4.500 3.700" fill="none" stroke="#fff" stroke-width="1.600"/>
  <rect x="959.500" y="745.500" width="7.500" height="7" fill="#3c3f8e" stroke="#8f9ad8" stroke-width=".8"/>
  <rect x="954" y="748.500" width="8" height="7.500" fill="#6ec2f4" stroke="#b6e0ff" stroke-width=".8"/>
  <ellipse cx="958" cy="758.500" rx="3.500" ry="1.300" fill="#d8d8f4"/>
  <ellipse cx="964" cy="755.500" rx="3" ry="1.100" fill="#c0c0e8"/>
</svg>
</body>
</html>
